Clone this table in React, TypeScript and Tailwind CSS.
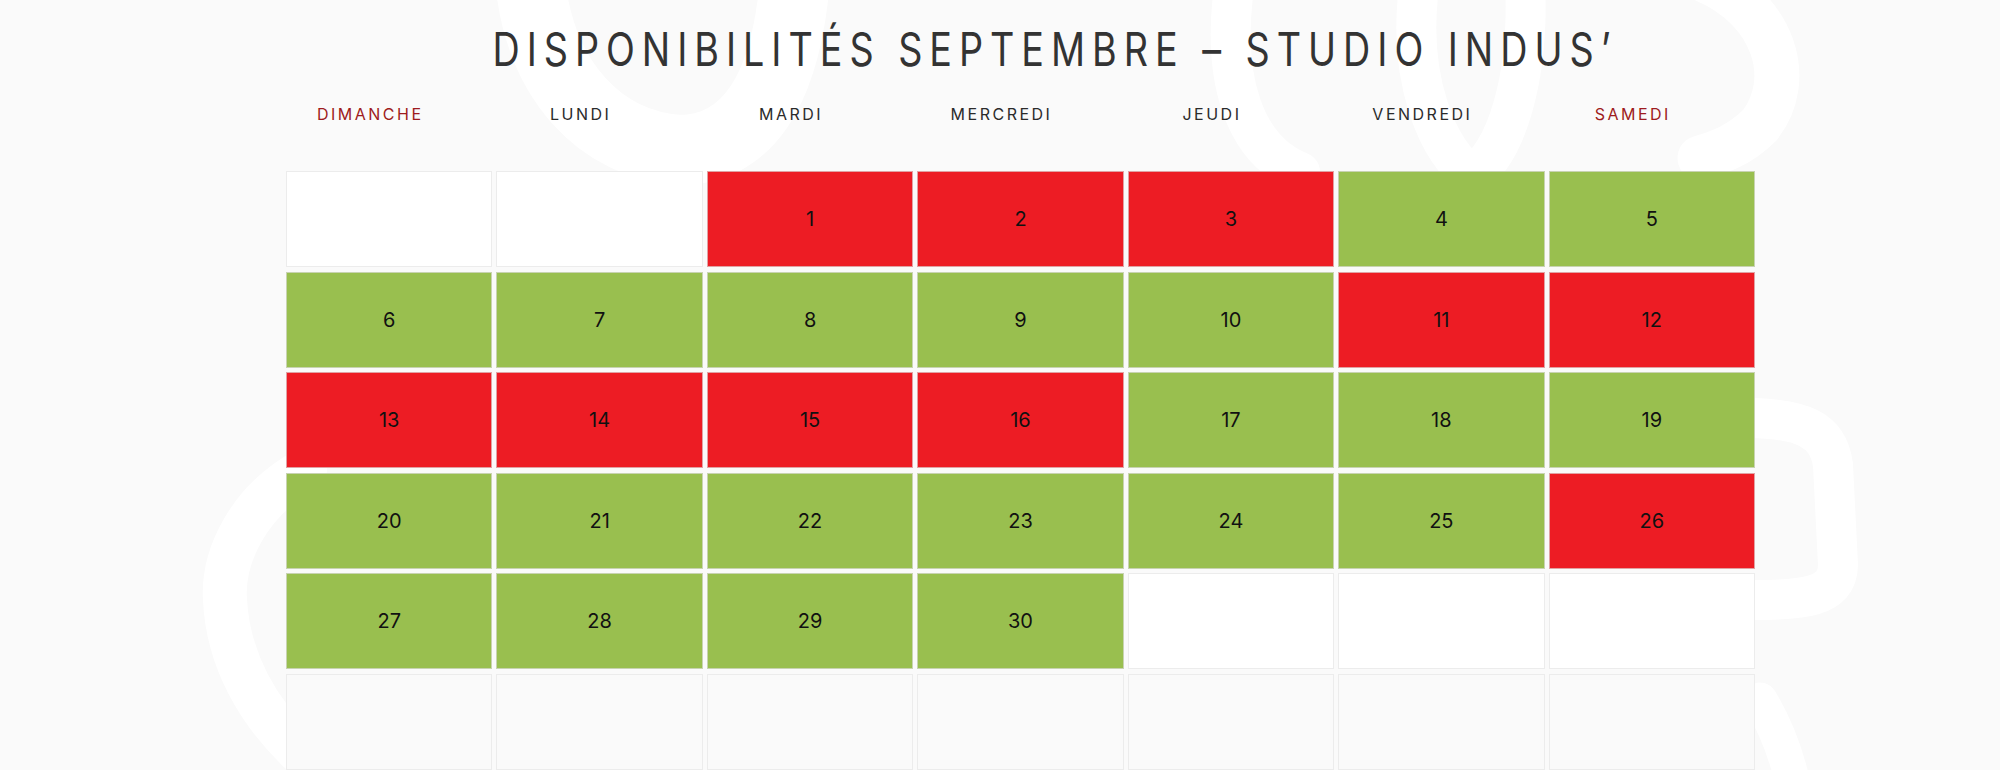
import React from 'react';

type DayStatus = 'free' | 'busy' | 'empty' | 'pad';

const DAYS = ['DIMANCHE', 'LUNDI', 'MARDI', 'MERCREDI', 'JEUDI', 'VENDREDI', 'SAMEDI'];

// jours réservés en septembre
const BUSY = [1, 2, 3, 11, 12, 13, 14, 15, 16, 26];

const buildCells = () => {
  const cells: { day?: number; status: DayStatus }[] = [];
  // le 1er septembre tombe un mardi
  cells.push({ status: 'empty' }, { status: 'empty' });
  for (let d = 1; d <= 30; d++) {
    cells.push({ day: d, status: BUSY.includes(d) ? 'busy' : 'free' });
  }
  while (cells.length < 35) cells.push({ status: 'empty' });
  while (cells.length < 42) cells.push({ status: 'pad' });
  return cells;
};

const cellClass: Record<DayStatus, string> = {
  free: 'bg-[#99bf4f] border-[#dcdcdc]/70',
  busy: 'bg-[#ed1c24] border-[#dcdcdc]/70',
  empty: 'bg-white border-[#ececec]',
  pad: 'bg-[#fafafa] border-[#ececec]',
};

const Watermark = () => (
  <svg
    className="pointer-events-none absolute inset-0 h-full w-full"
    viewBox="0 0 2000 770"
    fill="none"
    stroke="#ffffff"
    strokeLinecap="round"
  >
    <path d="M530 -20 C 540 80, 600 145, 680 150 C 745 150, 785 95, 795 -20" strokeWidth="70" />
    <path d="M1235 -20 C 1220 80, 1245 150, 1300 172" strokeWidth="40" />
    <path d="M1420 -20 C 1405 80, 1440 155, 1472 175 C 1505 155, 1530 80, 1525 -20" strokeWidth="40" />
    <path d="M1705 -20 C 1775 10, 1795 80, 1760 125 C 1740 145, 1720 152, 1700 158" strokeWidth="45" />
    <path d="M1755 418 C 1800 420, 1828 428, 1833 465 L 1838 565 C 1838 598, 1800 600, 1755 600" strokeWidth="40" />
    <path d="M1760 700 C 1775 725, 1785 750, 1792 780" strokeWidth="35" />
    <path d="M305 470 C 250 500, 222 555, 225 600 C 228 660, 258 712, 300 752" strokeWidth="44" />
  </svg>
);

export default function App() {
  const cells = buildCells();

  return (
    <div className="relative h-[770px] w-[2000px] overflow-hidden bg-[#fafafa] font-['Inter',sans-serif]">
      <Watermark />
      <div className="relative ml-[286px] flex w-[1469px] flex-col">
        <div className="pl-[68px] pt-[26px] text-center">
          <h1 className="inline-block scale-x-[0.82] whitespace-nowrap text-[46px] font-normal leading-none tracking-[8.5px] text-[#333333]">
            DISPONIBILITÉS SEPTEMBRE – STUDIO INDUS’
          </h1>
        </div>

        <div className="mt-[34px] grid grid-cols-7 gap-x-[4px]">
          {DAYS.map((d, i) => (
            <div
              key={d}
              className={`pr-[38px] text-center text-[16px] font-normal leading-none tracking-[2.5px] ${
                i === 0 || i === 6 ? 'text-[#9e1b20]' : 'text-[#2b2b2b]'
              }`}
            >
              {d}
            </div>
          ))}
        </div>

        <div className="mt-[49px] grid grid-cols-7 gap-x-[4px] gap-y-[4.5px]">
          {cells.map((c, i) => (
            <div
              key={i}
              className={`flex h-[96px] items-center justify-center border text-[20px] text-[#111111] ${cellClass[c.status]}`}
            >
              {c.day}
            </div>
          ))}
        </div>
      </div>
    </div>
  );
}
